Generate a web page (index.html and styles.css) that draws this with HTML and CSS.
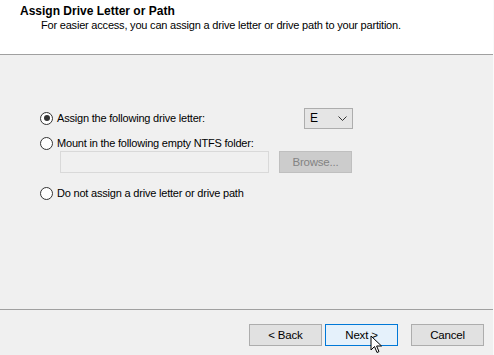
FILE: index.html
```html
<!DOCTYPE html>
<html>
<head>
<meta charset="utf-8">
<link rel="stylesheet" href="styles.css">
</head>
<body>
<div class="wizard">
  <div class="header">
    <div class="title">Assign Drive Letter or Path</div>
    <div class="subtitle">For easier access, you can assign a drive letter or drive path to your partition.</div>
  </div>
  <div class="content">
    <div class="row row-first">
      <label class="radio"><span class="dot checked"></span><span>Assign the following drive letter:</span></label>
      <div class="combo"><span>E</span>
        <svg class="chev" width="9" height="5" viewBox="0 0 9 5"><path d="M0.5 0.5 L4.5 4.5 L8.5 0.5" fill="none" stroke="#333" stroke-width="1"/></svg>
      </div>
    </div>
    <div class="row row-second">
      <label class="radio"><span class="dot"></span><span>Mount in the following empty NTFS folder:</span></label>
    </div>
    <div class="row row-folder">
      <div class="textbox"></div>
      <div class="btn disabled">Browse...</div>
    </div>
    <div class="row row-third">
      <label class="radio"><span class="dot"></span><span>Do not assign a drive letter or drive path</span></label>
    </div>
  </div>
  <div class="footer">
    <div class="btn back">&lt; Back</div>
    <div class="btn next">Next &gt;</div>
    <div class="btn cancel">Cancel</div>
    <svg class="cursor" width="14" height="20" viewBox="0 0 14 20"><path d="M1 1 L1 15 L4.5 11.5 L7 17.5 L9 16.6 L6.6 11 L11.5 11 Z" fill="#fff" stroke="#000" stroke-width="1" stroke-linejoin="round"/></svg>
  </div>
</div>
</body>
</html>
```
FILE: styles.css
```css
html, body {
  margin: 0;
  padding: 0;
}
body {
  width: 494px;
  height: 355px;
  overflow: hidden;
  background: #f0f0f0;
  font-family: "Liberation Sans", Arial, sans-serif;
  font-size: 11px;
  letter-spacing: -0.2px;
  color: #000;
}
.wizard {
  width: 493px;
  height: 355px;
  border-right: 1px solid #fafafa;
  display: flex;
  flex-direction: column;
}
.header {
  height: 55px;
  background: #fff;
  border-bottom: 1px solid #a0a0a0;
  box-sizing: border-box;
  padding: 4px 0 0 20px;
}
.title {
  font-weight: bold;
  font-size: 12px;
  line-height: 14px;
  letter-spacing: 0;
}
.subtitle {
  padding-left: 21px;
  line-height: 14px;
}
.content {
  height: 255px;
  box-sizing: border-box;
  padding: 53px 0 0 40px;
  border-bottom: 1px solid #a0a0a0;
  display: flex;
  flex-direction: column;
}
.row {
  display: flex;
  align-items: center;
}
.radio {
  display: flex;
  align-items: center;
  gap: 4px;
  height: 14px;
}
.dot {
  width: 11px;
  height: 11px;
  border: 1px solid #333;
  border-radius: 50%;
  background: #fff;
  position: relative;
}
.dot.checked::after {
  content: "";
  position: absolute;
  left: 2.5px;
  top: 2.5px;
  width: 6px;
  height: 6px;
  border-radius: 50%;
  background: #333;
}
.row-first {
  height: 20px;
}
.combo {
  margin-left: 99px;
  border: 1px solid #adadad;
  background: #e5e5e5;
  display: flex;
  align-items: center;
  justify-content: space-between;
  padding: 0 5px 0 5px;
  box-sizing: border-box;
  width: 49px;
  height: 21px;
  font-size: 12px;
}
.chev {
  margin-top: 1px;
}
.row-second {
  margin-top: 8px;
}
.row-folder {
  margin-top: 1px;
  padding-left: 20px;
  gap: 10px;
}
.textbox {
  width: 209px;
  height: 22px;
  box-sizing: border-box;
  border: 1px solid #d9d9d9;
  background: #f0f0f0;
}
.btn {
  box-sizing: border-box;
  height: 22px;
  width: 73px;
  border: 1px solid #adadad;
  background: #e1e1e1;
  display: flex;
  align-items: center;
  justify-content: center;
  font-size: 11.5px;
}
.btn.disabled {
  border-color: #bfbfbf;
  background: #cccccc;
  color: #838383;
}
.row-third {
  margin-top: 13px;
}
.footer {
  flex: 1;
  display: flex;
  align-items: flex-start;
  padding: 14px 9px 0 0;
  justify-content: flex-end;
  position: relative;
}
.btn.next {
  margin-left: 3px;
  border-color: #0078d7;
  background: #e5f1fb;
}
.btn.cancel {
  margin-left: 13px;
}
.cursor {
  position: absolute;
  left: 370px;
  top: 25px;
}
```
